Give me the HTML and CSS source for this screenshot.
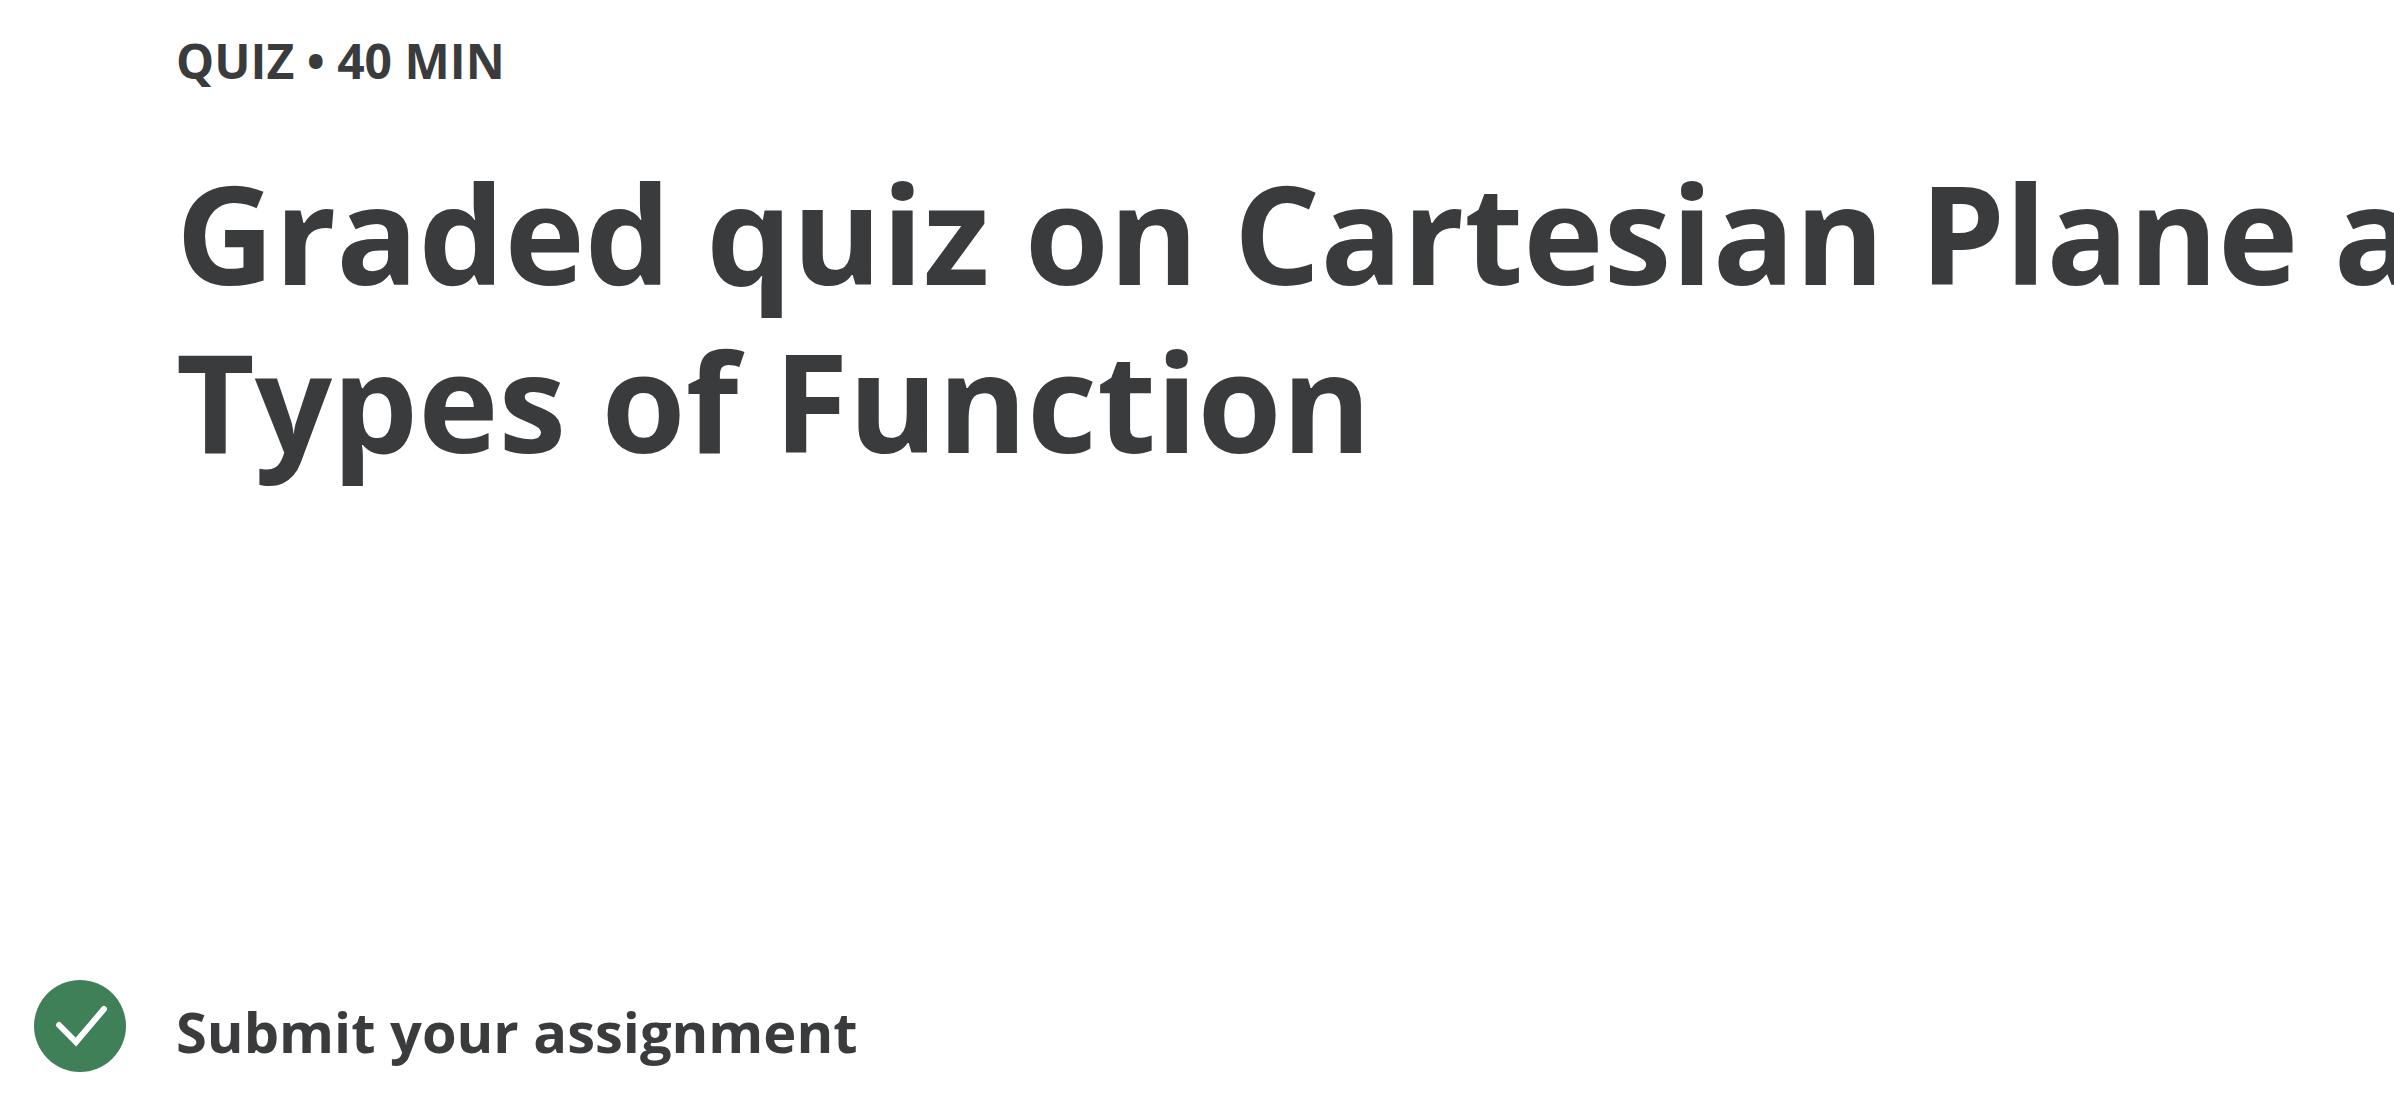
FILE: index.html
```html
<!DOCTYPE html>
<html lang="en">
<head>
  <meta charset="UTF-8">
  <meta name="viewport" content="width=device-width, initial-scale=1.0">
  <title>Graded quiz on Cartesian Plane and Types of Function</title>
  <link rel="stylesheet" href="styles.css">
</head>
<body>
<div class="quiz-page">
  <header class="quiz-header">
    <p class="quiz-meta">QUIZ • 40 MIN</p>
    <h1 class="quiz-title">Graded quiz on Cartesian Plane and Types of Function</h1>
  </header>

  <div class="submit-row">
    <svg class="check-icon" viewBox="0 0 92 92" aria-hidden="true">
      <circle cx="46" cy="46" r="46" fill="#3f8058"/>
      <path d="M25 45 L42 62 L70 29" fill="none" stroke="#fff" stroke-width="6" stroke-linecap="round"/>
    </svg>
    <h2 class="submit-title">Submit your assignment</h2>
  </div>
</div>
</body>
</html>
```

FILE: styles.css
```css
html, body {
  margin: 0;
  height: 100%;
  overflow: hidden;
  background: #fff;
}
body {
  font-family: "Open Sans", Arial, sans-serif;
  color: #3a3b3d;
}
.quiz-page {
  height: 1108px;
  padding: 34px 0 0 34px;
  box-sizing: border-box;
  display: flex;
  flex-direction: column;
  justify-content: space-between;
}
.quiz-header {
  width: 2800px;
  padding-left: 142px;
  box-sizing: border-box;
}
.quiz-meta {
  margin: 0;
  font-size: 48px;
  line-height: 54px;
  font-weight: 700;
}
.quiz-title {
  margin: 61px 0 0;
  font-size: 136px;
  line-height: 168px;
  font-weight: 700;
}
.submit-row {
  display: flex;
  align-items: center;
  gap: 50px;
  padding-bottom: 36px;
}
.check-icon {
  width: 92px;
  height: 92px;
  flex-shrink: 0;
}
.submit-title {
  margin: 10px 0 0;
  font-size: 56px;
  line-height: 76px;
  font-weight: 700;
}
```
